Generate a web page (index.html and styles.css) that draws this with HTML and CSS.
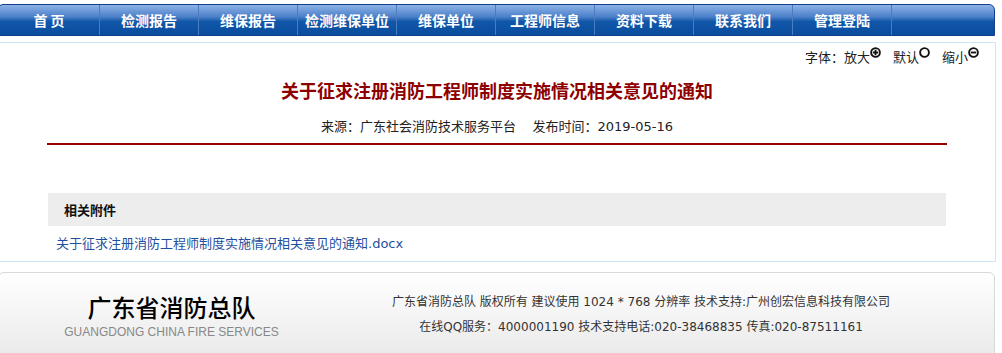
FILE: index.html
```html
<!DOCTYPE html>
<html lang="zh-CN">
<head>
    <meta charset="UTF-8">
    <title>关于征求注册消防工程师制度实施情况相关意见的通知</title>
    <link rel="stylesheet" href="styles.css">
</head>
<body>
    <div class="page">
        <!-- Main Navigation -->
        <div class="nav">
            <a class="nav-item first" href="#">首 页</a>
            <a class="nav-item" href="#">检测报告</a>
            <a class="nav-item" href="#">维保报告</a>
            <a class="nav-item" href="#">检测维保单位</a>
            <a class="nav-item" href="#">维保单位</a>
            <a class="nav-item" href="#">工程师信息</a>
            <a class="nav-item" href="#">资料下载</a>
            <a class="nav-item" href="#">联系我们</a>
            <a class="nav-item last" href="#">管理登陆</a>
        </div>

        <!-- Article -->
        <div class="content">
            <div class="font-bar">
                字体：放大<svg class="fs-icon" viewBox="0 0 10 10"><circle cx="5" cy="5" r="4"/><path d="M2.6 5h4.8M5 2.6v4.8"/></svg>
                <span class="fs-gap">默认</span><svg class="fs-icon" viewBox="0 0 10 10"><circle cx="5" cy="5" r="4"/></svg>
                <span class="fs-gap">缩小</span><svg class="fs-icon" viewBox="0 0 10 10"><circle cx="5" cy="5" r="4"/><path d="M2.6 5h4.8"/></svg>
            </div>
            <div class="article">
                <h1 class="title">关于征求注册消防工程师制度实施情况相关意见的通知</h1>
                <div class="meta">来源：广东社会消防技术服务平台&nbsp;&nbsp;&nbsp;&nbsp;发布时间：2019-05-16</div>
                <div class="attach-head">相关附件</div>
                <div class="attach-list">
                    <a href="#">关于征求注册消防工程师制度实施情况相关意见的通知.docx</a>
                </div>
            </div>
        </div>

        <!-- Footer -->
        <div class="footer">
            <div class="footer-logo">
                <div class="logo-cn">广东省消防总队</div>
                <div class="logo-en">GUANGDONG CHINA FIRE SERVICES</div>
            </div>
            <div class="footer-info">
                <p>广东省消防总队 版权所有 建议使用 1024 * 768 分辨率 技术支持:广州创宏信息科技有限公司</p>
                <p>在线QQ服务：4000001190 技术支持电话:020-38468835 传真:020-87511161</p>
            </div>
        </div>
    </div>
</body>
</html>
```

FILE: styles.css
```css
/* Global */
* {
    box-sizing: border-box;
}

body {
    margin: 0;
    background: #fff;
    font-family: "DejaVu Sans", "Noto Sans CJK SC", sans-serif;
    font-size: 13px;
    color: #333;
    overflow: hidden;
}

a {
    text-decoration: none;
}

.page {
    width: 998px;
    margin: 4px 0 0 -2px;
}

/* Navigation */
.nav {
    display: flex;
    width: 997px;
    height: 32px;
    border: 1px solid #123f8c;
    border-radius: 5px 6px 0 0;
    background: linear-gradient(#8db2e6 0%, #4b7fc8 40%, #1157a9 55%, #0a4c9e 100%);
}

.nav-item {
    width: 99px;
    line-height: 30px;
    text-align: center;
    color: #fff;
    font-family: "Noto Sans CJK SC", sans-serif;
    font-weight: bold;
    font-size: 14px;
    border-right: 1px solid #4a7cc2;
}

.nav-item.first {
    width: 101px;
}

/* Content box */
.content {
    margin-top: 6px;
    border: 1px solid #c9e6f7;
    padding-bottom: 7px;
}

.font-bar {
    margin-top: 4px;
    padding-right: 16px;
    line-height: 20px;
    text-align: right;
    font-family: "Noto Sans CJK SC", sans-serif;
    color: #222;
}

.fs-icon {
    width: 11px;
    height: 11px;
    vertical-align: text-top;
    fill: none;
    stroke: #111;
    stroke-width: 1.7;
}

.fs-gap {
    margin-left: 9px;
}

.article {
    width: 900px;
    margin: 0 auto;
}

.title {
    margin: 10px 0 0;
    line-height: 26px;
    text-align: center;
    font-family: "Noto Sans CJK SC", sans-serif;
    font-size: 18px;
    font-weight: bold;
    color: #8e0000;
}

.meta {
    margin-top: 14px;
    padding-bottom: 6px;
    line-height: 20px;
    text-align: center;
    color: #222;
    border-bottom: 2px solid #990000;
}

.attach-head {
    margin: 48px 1px 0;
    padding-left: 16px;
    line-height: 33px;
    background: #ededed;
    font-family: "Noto Sans CJK SC", sans-serif;
    font-weight: bold;
    color: #111;
}

.attach-list {
    margin-top: 8px;
    padding-left: 9px;
    line-height: 20px;
}

.attach-list a {
    color: #1f4f9f;
}

/* Footer */
.footer {
    display: flex;
    width: 997px;
    height: 100px;
    margin-top: 10px;
    border: 1px solid #d8d8d8;
    border-radius: 6px 6px 0 0;
    background: linear-gradient(#ffffff, #e6e6e6);
}

.footer-logo {
    width: 345px;
    padding-top: 19px;
    text-align: center;
}

.logo-cn {
    line-height: 30px;
    font-family: "Noto Sans CJK SC", sans-serif;
    font-size: 24px;
    font-weight: 500;
    color: #000;
}

.logo-en {
    margin-top: 2px;
    line-height: 16px;
    font-family: "Liberation Sans", Arial, sans-serif;
    font-size: 12px;
    color: #888;
}

.footer-info {
    width: 594px;
    padding-top: 17px;
    text-align: center;
    font-size: 12px;
    color: #333;
}

.footer-info p {
    margin: 0;
    line-height: 25px;
}
```
